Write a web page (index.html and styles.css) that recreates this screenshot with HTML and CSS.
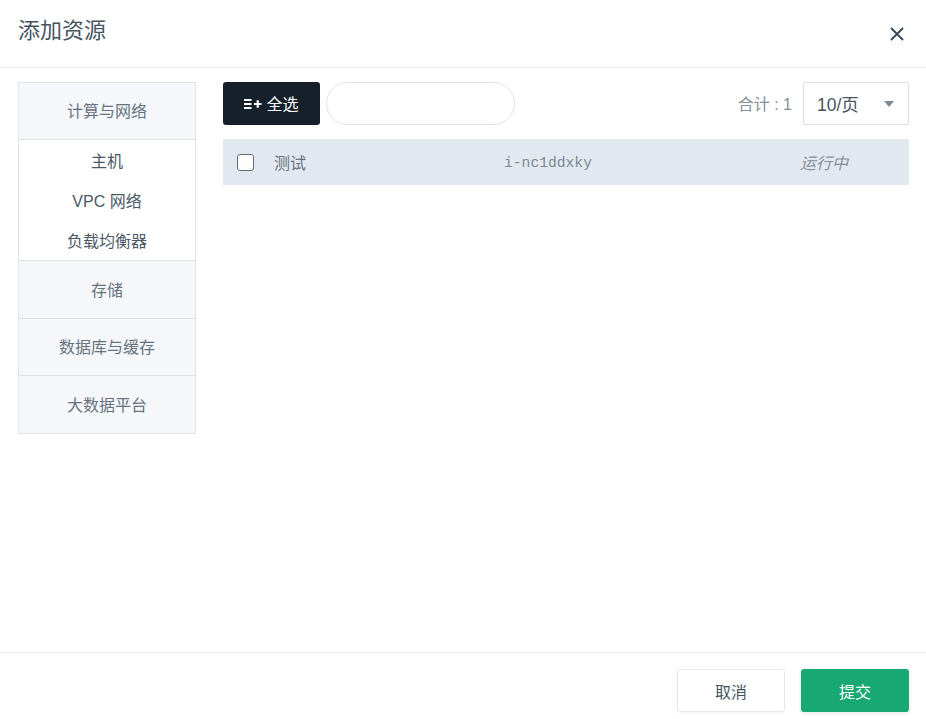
FILE: index.html
```html
<!DOCTYPE html>
<html lang="zh">
<head>
<meta charset="utf-8">
<title>添加资源</title>
<link rel="stylesheet" href="styles.css">
</head>
<body>
<div class="dialog">
  <header class="head">
    <h1 class="title">添加资源</h1>
    <button class="close" aria-label="关闭">
      <svg width="16" height="16" viewBox="0 0 16 16"><path d="M2 2 L14 14 M14 2 L2 14" stroke="#36495a" stroke-width="1.9" fill="none"/></svg>
    </button>
  </header>
  <div class="body">
    <nav class="side">
      <div class="group">计算与网络</div>
      <div class="subs">
        <div class="sub">主机</div>
        <div class="sub">VPC 网络</div>
        <div class="sub">负载均衡器</div>
      </div>
      <div class="group g2">存储</div>
      <div class="group g3">数据库与缓存</div>
      <div class="group g4">大数据平台</div>
    </nav>
    <main class="main">
      <div class="toolbar">
        <button class="all">
          <svg width="18" height="10" viewBox="0 0 18 10"><path d="M0 1 H7.5 M0 5 H7.5 M0 9 H7.5" stroke="#fff" stroke-width="2" fill="none"/><path d="M10 5 H17.5 M13.75 1.2 V8.8" stroke="#fff" stroke-width="2.2" fill="none"/></svg>
          <span class="all-label">全选</span>
        </button>
        <input class="search" type="text">
        <span class="total">合计 : 1</span>
        <div class="pager"><span class="pager-label">10/页</span><i class="caret"></i></div>
      </div>
      <div class="row">
        <span class="check"></span>
        <span class="name">测试</span>
        <span class="id">i-nc1ddxky</span>
        <span class="status">运行中</span>
      </div>
    </main>
  </div>
  <footer class="foot">
    <button class="btn cancel">取消</button>
    <button class="btn submit">提交</button>
  </footer>
</div>
</body>
</html>
```
FILE: styles.css
```css
* { box-sizing: border-box; }
html, body { margin: 0; height: 100%; background: #fff; }
body {
  font-family: "Liberation Sans", "Noto Sans CJK SC", sans-serif;
  color: #36495a;
  overflow: hidden;
}
.dialog { width: 926px; height: 719px; display: flex; flex-direction: column; }
.head {
  height: 68px; flex: none;
  border-bottom: 1px solid #e6e9ed;
  padding: 0 21px 0 18px;
  display: flex; align-items: center; justify-content: space-between;
}
.title { margin: 0 0 6px; font-size: 22px; font-weight: 400; line-height: 32px; color: #46545f; }
.close { border: 0; background: none; padding: 0; margin-top: 0; width: 16px; height: 16px; display: flex; }
.body { flex: 1; display: flex; padding: 14px 17px 0 18px; gap: 27px; min-height: 0; }
.side {
  width: 178px; height: 352px; flex: none;
  border: 1px solid #dfe3e8;
  font-size: 16px; text-align: center;
}
.group {
  height: 57px; line-height: 56px; padding-top: 1px;
  background: #f5f7fa;
  color: #66737f;
  border-bottom: 1px solid #dfe3e8;
}
.g2 { height: 58px; line-height: 56px; padding-top: 2px; }
.g3 { height: 57px; line-height: 56px; padding-top: 1px; }
.g4 { height: 57px; line-height: 57px; padding-top: 1px; border-bottom: 0; }
.subs { height: 121px; padding-top: 2px; border-bottom: 1px solid #dfe3e8; }
.sub { height: 40px; line-height: 40px; color: #4a5864; }
.main { flex: 1; min-width: 0; }
.toolbar { height: 43px; display: flex; align-items: center; }
.all {
  width: 97px; height: 43px;
  background: #15202b; color: #fff;
  border: 0; border-radius: 3px;
  font: inherit; font-size: 16px;
  display: flex; align-items: center; justify-content: center; gap: 4px;
  padding: 0;
}
.all-label { padding-bottom: 2px; }
.search {
  width: 189px; height: 43px; margin-left: 6px;
  border: 1px solid #dfe3e8; border-radius: 22px;
  background: #fff; outline: 0;
}
.total { margin-left: auto; padding-bottom: 2px; font-size: 16px; color: #858f99; }
.pager {
  width: 106px; height: 43px; margin-left: 11px;
  border: 1px solid #dcdfe4; border-radius: 2px;
  display: flex; align-items: center; justify-content: space-between;
  padding: 0 14px 0 13px;
  font-size: 17.5px; color: #46545f;
}
.caret {
  width: 0; height: 0;
  border-left: 5.5px solid transparent;
  border-right: 5.5px solid transparent;
  border-top: 6px solid #808b95;
  margin-top: 1px;
}
.row {
  height: 46px; margin-top: 14px;
  background: #e2e8f0;
  display: flex; align-items: center;
  padding-left: 14px;
  font-size: 16px;
}
.check {
  width: 17px; height: 17px;
  background: #fff; border: 1px solid #5f6e7b; border-radius: 3px;
  flex: none;
}
.name { width: 230px; margin-left: 20px; color: #66737f; flex: none; }
.id {
  width: 296px; flex: none; padding-top: 2px;
  font-family: "Liberation Mono", "DejaVu Sans Mono", monospace;
  font-size: 14.67px; color: #7d8893;
}
.status { font-style: italic; color: #858f99; font-size: 16px; }
.foot {
  height: 67px; flex: none;
  border-top: 1px solid #e6e9ed;
  padding: 16px 17px 0 0;
  display: flex; justify-content: flex-end; gap: 16px;
}
.btn {
  width: 108px; height: 43px;
  border-radius: 3px;
  font: inherit; font-size: 16px;
  padding: 0;
}
.cancel { background: #fff; border: 1px solid #e6e9ed; color: #46545f; box-shadow: 0 1px 3px rgba(0,0,0,.05); }
.submit { background: #18a874; border: 0; color: #fff; box-shadow: 0 2px 4px rgba(0,0,0,.08); }
```
